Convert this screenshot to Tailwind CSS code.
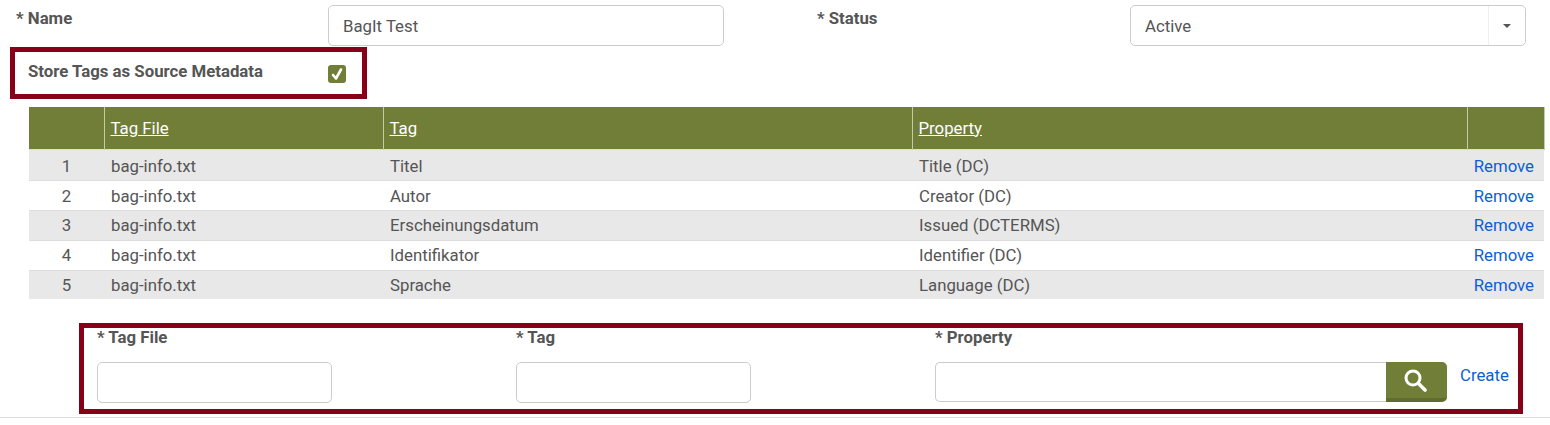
<!DOCTYPE html>
<html lang="en">
<head>
    <meta charset="UTF-8">
    <meta name="viewport" content="width=device-width, initial-scale=1.0">
    <title>BagIt Test</title>
    <script src="https://cdn.jsdelivr.net/npm/@tailwindcss/browser@4"></script>
</head>
<body class="bg-white h-[425px] overflow-hidden font-['Roboto',sans-serif] text-[16.8px] text-[#555]">
    <!-- name / status -->
    <div class="flex h-[47px] pt-[5px]">
        <label class="w-[328px] pl-4 font-bold leading-[27px]">* Name</label>
        <input type="text" value="BagIt Test" class="w-[396px] h-[41px] pl-[14px] pt-[1px] border border-[#ccc] rounded-[5px] text-[#555] outline-none">
        <label class="ml-[93px] w-[313px] font-bold leading-[27px]">* Status</label>
        <div class="flex w-[396px] h-[41px] border border-[#ccc] rounded-[5px]">
            <span class="flex-1 pl-[14px] leading-[41px]">Active</span>
            <span class="w-[37px] flex items-center justify-center border-l border-[#f0f0f0]">
                <span class="w-0 h-0 border-x-4 border-x-transparent border-t-4 border-t-[#555]"></span>
            </span>
        </div>
    </div>

    <!-- store tags -->
    <div class="flex ml-[10px] w-[357px] h-[52px] border-[5px] border-[#860017]">
        <label class="w-[313px] pl-[13px] pt-[6px] font-bold leading-[27px]">Store Tags as Source Metadata</label>
        <span class="w-[18px] h-[18px] mt-[13px] rounded-[3px] bg-[#707e37] flex items-center justify-center">
            <svg width="14" height="14" viewBox="0 0 14 14" fill="none" stroke="white" stroke-width="2.6" stroke-linecap="round" stroke-linejoin="round"><path d="M3 8 6 11.5 11 2.5"/></svg>
        </span>
    </div>

    <!-- mappings -->
    <table class="ml-[29px] mt-2 w-[1515px] table-fixed border-collapse">
        <colgroup>
            <col class="w-[75px]"><col class="w-[279px]"><col class="w-[529px]"><col class="w-[555px]"><col class="w-[77px]">
        </colgroup>
        <thead>
            <tr class="h-[42px] bg-[#707e37] text-white text-left">
                <th></th>
                <th class="border-l border-[#c5cbaa] pl-[6px] pt-[1px] font-normal"><span class="underline">Tag File</span></th>
                <th class="border-l border-[#c5cbaa] pl-[6px] pt-[1px] font-normal"><span class="underline">Tag</span></th>
                <th class="border-l border-[#c5cbaa] pl-[6px] pt-[1px] font-normal"><span class="underline">Property</span></th>
                <th class="border-x border-[#c5cbaa]"></th>
            </tr>
        </thead>
        <tbody>
            <tr class="h-[31px] bg-[#e8e8e8] border-t border-[#ddd]">
                <td class="text-center pt-[4px]">1</td><td class="pl-[7px] pt-[4px]">bag-info.txt</td><td class="pl-[7px] pt-[4px]">Titel</td><td class="pl-[7px] pt-[4px]">Title (DC)</td>
                <td class="text-right pr-[10px] pt-[4px]"><a href="#" class="text-[#0b5fd6]">Remove</a></td>
            </tr>
            <tr class="h-[30px] bg-white border-t border-[#ddd]">
                <td class="text-center pt-[3px]">2</td><td class="pl-[7px] pt-[3px]">bag-info.txt</td><td class="pl-[7px] pt-[3px]">Autor</td><td class="pl-[7px] pt-[3px]">Creator (DC)</td>
                <td class="text-right pr-[10px] pt-[3px]"><a href="#" class="text-[#0b5fd6]">Remove</a></td>
            </tr>
            <tr class="h-[30px] bg-[#e8e8e8] border-t border-[#ddd]">
                <td class="text-center pt-[1px]">3</td><td class="pl-[7px] pt-[1px]">bag-info.txt</td><td class="pl-[7px] pt-[1px]">Erscheinungsdatum</td><td class="pl-[7px] pt-[1px]">Issued (DCTERMS)</td>
                <td class="text-right pr-[10px] pt-[1px]"><a href="#" class="text-[#0b5fd6]">Remove</a></td>
            </tr>
            <tr class="h-[30px] bg-white border-t border-[#ddd]">
                <td class="text-center pt-[1px]">4</td><td class="pl-[7px] pt-[1px]">bag-info.txt</td><td class="pl-[7px] pt-[1px]">Identifikator</td><td class="pl-[7px] pt-[1px]">Identifier (DC)</td>
                <td class="text-right pr-[10px] pt-[1px]"><a href="#" class="text-[#0b5fd6]">Remove</a></td>
            </tr>
            <tr class="h-[29px] bg-[#e8e8e8] border-t border-[#ddd]">
                <td class="text-center pt-[2px]">5</td><td class="pl-[7px] pt-[2px]">bag-info.txt</td><td class="pl-[7px] pt-[2px]">Sprache</td><td class="pl-[7px] pt-[2px]">Language (DC)</td>
                <td class="text-right pr-[10px] pt-[2px]"><a href="#" class="text-[#0b5fd6]">Remove</a></td>
            </tr>
        </tbody>
    </table>

    <!-- add row -->
    <div class="flex ml-[79px] mt-6 w-[1444px] h-[91px] border-[5px] border-[#860017] pl-[13px]">
        <div class="w-[419px]">
            <label class="block font-bold leading-[18px]">* Tag File</label>
            <input type="text" class="block mt-[16px] w-[235px] h-[41px] border border-[#ccc] rounded-[5px] outline-none">
        </div>
        <div class="w-[419px]">
            <label class="block font-bold leading-[18px]">* Tag</label>
            <input type="text" class="block mt-[16px] w-[235px] h-[41px] border border-[#ccc] rounded-[5px] outline-none">
        </div>
        <div>
            <label class="block font-bold leading-[18px]">* Property</label>
            <div class="flex mt-[16px] h-[40px]">
                <input type="text" class="w-[451px] border border-r-0 border-[#ccc] rounded-l-[5px] outline-none">
                <button class="w-[61px] pr-[3px] bg-[#707e37] border-b-[4px] border-[#5f6b2f] rounded-r-[5px] flex items-center justify-center">
                    <svg width="24" height="24" viewBox="0 0 24 24" fill="none" stroke="white" stroke-linecap="round"><circle cx="10" cy="10" r="7" stroke-width="3"/><path d="M15.5 15.5 22 22" stroke-width="3.6"/></svg>
                </button>
            </div>
        </div>
        <a href="#" class="ml-[13px] mt-[35px] h-[24px] text-[#0b5fd6]">Create</a>
    </div>

    <div class="mt-[3px] border-t border-[#ddd]"></div>
</body>
</html>
